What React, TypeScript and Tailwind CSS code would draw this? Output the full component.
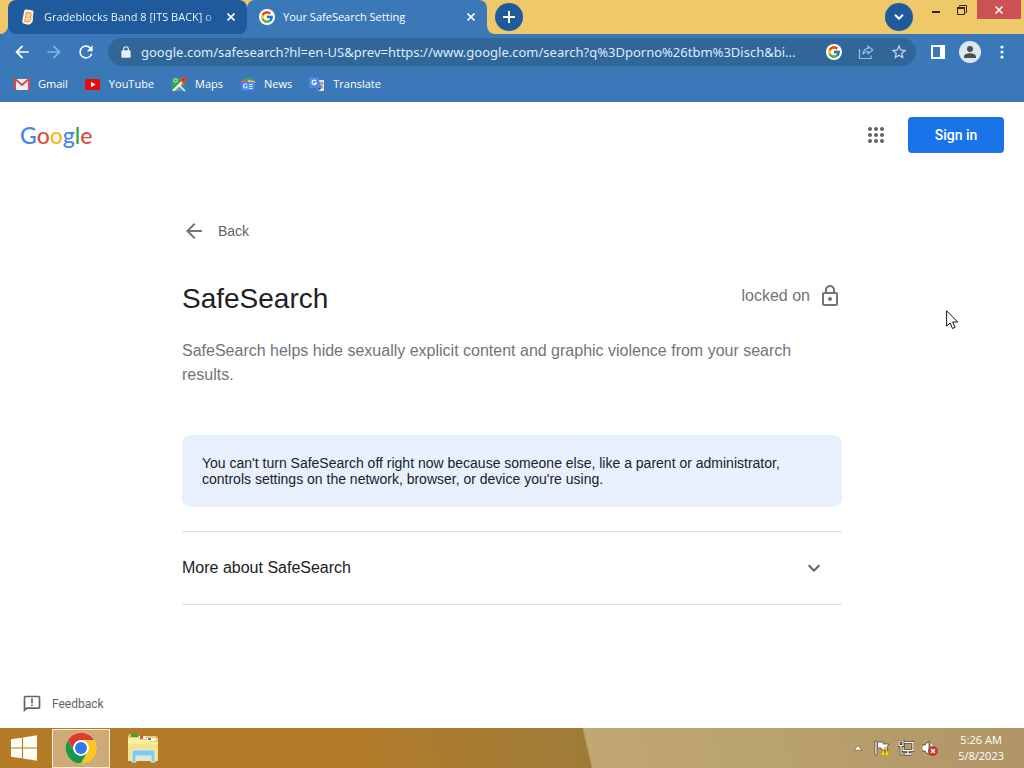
import type { ReactNode } from "react";
import { FcGoogle } from "react-icons/fc";

const segoe = "font-['Open_Sans','Noto_Sans',sans-serif]";

function MaterialIcon({ d, className }: { d: string; className: string }) {
  return (
    <svg viewBox="0 0 24 24" className={className} fill="currentColor" aria-hidden="true">
      <path d={d} />
    </svg>
  );
}

const arrowBack = "M20 11H7.83l5.59-5.59L12 4l-8 8 8 8 1.41-1.41L7.83 13H20v-2z";
const arrowForward = "M12 4l-1.41 1.41L16.17 11H4v2h12.17l-5.58 5.59L12 20l8-8z";
const refresh =
  "M17.65 6.35A7.958 7.958 0 0 0 12 4a8 8 0 1 0 7.73 10h-2.08A6 6 0 1 1 12 6c1.66 0 3.14.69 4.22 1.78L13 11h7V4l-2.35 2.35z";
const lockOutline =
  "M18 8h-1V6c0-2.76-2.24-5-5-5S7 3.24 7 6v2H6c-1.1 0-2 .9-2 2v10c0 1.1.9 2 2 2h12c1.1 0 2-.9 2-2V10c0-1.1-.9-2-2-2zM9 6c0-1.66 1.34-3 3-3s3 1.34 3 3v2H9V6zm9 14H6V10h12v10zm-6-3c1.1 0 2-.9 2-2s-.9-2-2-2-2 .9-2 2 .9 2 2 2z";
const lockSolid =
  "M18 9h-1V7A5 5 0 0 0 7 7v2H6a2 2 0 0 0-2 2v9a2 2 0 0 0 2 2h12a2 2 0 0 0 2-2v-9a2 2 0 0 0-2-2zM9 7a3 3 0 0 1 6 0v2H9z";
const star =
  "M22 9.24l-7.19-.62L12 2 9.19 8.63 2 9.24l5.46 4.73L5.82 21 12 17.27 18.18 21l-1.63-7.03L22 9.24zM12 15.4l-3.76 2.27 1-4.28-3.32-2.88 4.38-.38L12 6.1l1.71 4.04 4.38.38-3.32 2.88 1 4.28L12 15.4z";
const expandMore = "M16.59 8.59L12 13.17 7.41 8.59 6 10l6 6 6-6z";
const feedback =
  "M20 2H4c-1.1 0-1.99.9-1.99 2L2 22l4-4h14c1.1 0 2-.9 2-2V4c0-1.1-.9-2-2-2zm0 14H5.17L4 17.17V4h16v12zM11 5h2v6h-2V5zm0 7.5h2v2h-2z";

function TabClose() {
  return (
    <button aria-label="Close tab" className="flex size-4 shrink-0 items-center justify-center text-white">
      <svg viewBox="0 0 8 8" className="size-2" stroke="currentColor" strokeWidth="1.6">
        <path d="M0.5 0.5l7 7M7.5 0.5l-7 7" />
      </svg>
    </button>
  );
}

function GoogleBadge() {
  return (
    <span className="flex size-4 shrink-0 items-center justify-center rounded-full bg-white">
      <FcGoogle className="size-3.5" />
    </span>
  );
}

function TabStrip() {
  return (
    <div className="flex h-[34px] bg-[linear-gradient(#efc869_50%,#3a78b8_50%)]">
      <div className="w-2 rounded-br-lg bg-[#efc869]" />
      <div className="flex w-[239px] items-center rounded-lg bg-[#1f5b9c] pr-2 pl-3">
        <svg viewBox="0 0 16 16" className="mr-2 size-4 shrink-0">
          <path
            d="M5 .8Q5.300 .2 6.500 .4L12 1.200Q13.800 1.600 13.500 3.500L12.800 8 13 10.500Q12.800 13.500 10.500 15L8 15.800 3.500 14.600Q2 14 2.300 12L3.800 3.500Q4 1.800 5 .8z"
            fill="#fdf3e4"
          />
          <path
            d="M6.500 3.500L10.500 4Q11.600 4.600 11 6.400L10.200 8Q11 9 10.300 11Q9.500 13 7.500 12.800L4.800 12.200z"
            fill="none"
            stroke="#eda04c"
            strokeWidth="1.4"
          />
          <path d="M6 8l4 .5M7.500 5.800l1.500 .2M7 10.500l1.500 .2" stroke="#eda04c" strokeWidth="1.2" />
        </svg>
        <span className="min-w-0 flex-1 bg-[linear-gradient(90deg,#fff_88%,transparent)] bg-clip-text text-[11px] leading-4 whitespace-nowrap text-transparent">
          Gradeblocks Band 8 [ITS BACK] o
        </span>
        <TabClose />
      </div>
      <div className="flex w-60 items-center rounded-t-lg bg-[#3a78b8] pr-2 pl-3 text-white">
        <GoogleBadge />
        <span className="ml-2 flex-1 text-[11px] leading-4">Your SafeSearch Setting</span>
        <TabClose />
      </div>
      <div className="flex flex-1 items-start rounded-bl-lg bg-[#efc869] pl-2">
        <button
          aria-label="New tab"
          className="mt-[3px] flex size-7 items-center justify-center rounded-full bg-[#1f5b9c]"
        >
          <svg viewBox="0 0 12 12" className="size-3" stroke="#fff" strokeWidth="2">
            <path d="M6 0v12M0 6h12" />
          </svg>
        </button>
        <button
          aria-label="Search tabs"
          className="mt-[3px] ml-auto flex size-7 items-center justify-center rounded-full bg-[#1f5b9c]"
        >
          <svg viewBox="0 0 10 6" className="h-1.5 w-2.5" fill="none" stroke="#fff" strokeWidth="2">
            <path d="M1 .8l4 4 4-4" />
          </svg>
        </button>
        <button aria-label="Minimize" className="ml-[10px] flex h-5 w-[26px] items-center justify-center">
          <svg viewBox="0 0 8 10" className="h-2.5 w-2">
            <rect y="6" width="8" height="2" fill="#3a2512" />
          </svg>
        </button>
        <button aria-label="Restore" className="flex h-5 w-[26px] items-center justify-center">
          <svg viewBox="0 0 10 10" className="size-2.5" fill="none" stroke="#3a2512">
            <path d="M2.500 1.500v-1h7v7h-1" />
            <path d="M.5 3.500h7v6h-7z" />
            <path d="M0 3h8" strokeWidth="2" />
          </svg>
        </button>
        <button
          aria-label="Close"
          className="mr-[3px] ml-0.5 flex h-[19px] w-[44px] items-center justify-center bg-[#ca5255]"
        >
          <svg viewBox="0 0 8 8" className="size-2" stroke="#fff" strokeWidth="1.5">
            <path d="M.5.5l7 7M7.500.5l-7 7" />
          </svg>
        </button>
      </div>
    </div>
  );
}

function Toolbar() {
  return (
    <div className="flex h-9 items-center pr-[15px] pl-3 text-white">
      <button aria-label="Back" className="flex w-8">
        <MaterialIcon d={arrowBack} className="size-5" />
      </button>
      <button aria-label="Forward" className="flex w-8 text-[#86b1e0]">
        <MaterialIcon d={arrowForward} className="size-5" />
      </button>
      <button aria-label="Reload" className="flex w-8">
        <MaterialIcon d={refresh} className="size-5" />
      </button>
      <div className="flex h-7 min-w-0 flex-1 items-center rounded-full bg-[#316699] pr-2 pl-2.5">
        <MaterialIcon d={lockSolid} className="ml-px size-3.5 shrink-0 text-[#e4effa]" />
        <input
          aria-label="Address"
          readOnly
          value="google.com/safesearch?hl=en-US&prev=https://www.google.com/search?q%3Dporno%26tbm%3Disch&bi..."
          className="mr-2 ml-2 min-w-0 flex-1 bg-transparent font-['Noto_Sans',sans-serif] text-[13px] leading-5 text-[#dcecfb] outline-none"
        />
        <GoogleBadge />
        <button aria-label="Share" className="ml-4 text-[#9dbfe0]">
          <svg viewBox="0 0 16 16" className="size-4" fill="none" stroke="currentColor" strokeWidth="1.2">
            <path d="M1.500 5v9.500h11.500v-3" />
            <path d="M10 2.200l4.800 3.800-4.800 3.800v-2.300c-2.500 0-4 .8-5 2.700 .2-3.300 1.800-5.400 5-5.900z" />
          </svg>
        </button>
        <button aria-label="Bookmark this page" className="ml-4 text-[#c3daf1]">
          <MaterialIcon d={star} className="size-[18px]" />
        </button>
      </div>
      <button aria-label="Side panel" className="ml-[15px]">
        <svg viewBox="0 0 14 14" className="size-3.5" fill="none">
          <path d="M1 1h12v12H1z" stroke="#fff" strokeWidth="2" />
          <path d="M9 0h5v14H9z" fill="#fff" />
        </svg>
      </button>
      <button aria-label="Profile" className="ml-3.5">
        <svg viewBox="0 0 22 22" className="size-[22px]">
          <circle cx="11" cy="11" r="11" fill="#dce6ee" />
          <circle cx="11" cy="8" r="3" fill="#4d4f57" />
          <path d="M5 17v-1.500c0-2.400 3.500-3.300 6-3.300s6 .9 6 3.300V17z" fill="#4d4f57" />
        </svg>
      </button>
      <button aria-label="Menu" className="ml-3.5 flex w-[14px] justify-center">
        <svg viewBox="0 0 4 14" className="h-3.5 w-1" fill="#fff">
          <circle cx="2" cy="2" r="1.600" />
          <circle cx="2" cy="7" r="1.600" />
          <circle cx="2" cy="12" r="1.600" />
        </svg>
      </button>
    </div>
  );
}

function Bookmark({ label, children }: { label: string; children: ReactNode }) {
  return (
    <a href="#" className="flex items-center gap-2 text-[11px] leading-4 text-white">
      <svg viewBox="0 0 16 16" className="size-4 shrink-0">
        {children}
      </svg>
      {label}
    </a>
  );
}

function Bookmarks() {
  return (
    <nav className="flex h-8 items-start gap-[17px] px-3.5 pt-1.5">
      <Bookmark label="Gmail">
        <path d="M1 3h14v11H1z" fill="#f1f0f2" />
        <path d="M1 14V3l7 6 7-6v11" fill="none" stroke="#d8494c" strokeWidth="2" />
        <path d="M2 14l4.500-5M14 14L9.500 9" stroke="#d5d5d9" />
      </Bookmark>
      <Bookmark label="YouTube">
        <rect y="3" width="15" height="11" rx="1.500" fill="#f20505" />
        <path d="M6 5.800v5.400l4.500-2.700z" fill="#fff" />
      </Bookmark>
      <Bookmark label="Maps">
        <path d="M1 2h9l4 4v5L8 9l-6 6H1z" fill="#37a15b" />
        <path d="M8 9l6 6H2z" fill="#5a90e8" />
        <path d="M1 15L11 5l2 2-9 8z" fill="#f6cf48" />
        <path d="M2 14.500L12 4.500M8 9l6 6" stroke="#fff" strokeWidth="1.300" />
        <circle cx="4.500" cy="4.500" r="1.800" fill="none" stroke="#d8eee0" />
        <path d="M9.500 3.500a3 3 0 0 1 6 0c0 2-1.800 2.800-3 5.500-1.200-2.700-3-3.500-3-5.500z" fill="#e2443a" />
        <circle cx="12.500" cy="3.500" r="1" fill="#8d2923" />
      </Bookmark>
      <Bookmark label="News">
        <path d="M3 3l9-1.500 1 6H3z" fill="#35a567" />
        <path d="M1 5l4-1.500L8 8 3 10z" fill="#e95c4b" />
        <path d="M8 4l7 1-1 5H7z" fill="#f5c54a" />
        <rect x="1.500" y="6" width="12.500" height="8.500" rx="1" fill="#4d86ec" />
        <path d="M7 8.800a2 2 0 1 0 .2 2H5.700M9 8.500h3.500M9 10.500h3.500M9 12.500h3.500" fill="none" stroke="#e2ecfd" strokeWidth="1.100" />
      </Bookmark>
      <Bookmark label="Translate">
        <path d="M6 4h9v11H9z" fill="#e2e4e8" />
        <path d="M0 1h9l3.500 11H0z" fill="#4b86e8" />
        <path d="M8.500 12H12.500L9.500 15z" fill="#2d58ad" />
        <path d="M7 5a2.200 2.200 0 1 0 .4 2H5.200" fill="none" stroke="#fff" strokeWidth="1.200" />
        <path d="M10 7h4.500M12.500 6v1M13.500 7c0 2-1 3.500-2.500 4.500M11 8.500c.5 1.500 1.500 2.500 3 3" fill="none" stroke="#737a87" strokeWidth=".9" />
      </Bookmark>
    </nav>
  );
}

function ChromeLogo() {
  return (
    <svg viewBox="0 0 48 48" className="size-8">
      <circle cx="24" cy="24" r="23" fill="#fff" />
      <path d="M4.080 12.500A23 23 0 0 1 43.920 12.500H24A11.500 11.500 0 0 0 14.040 29.750z" fill="#dd3b2e" />
      <path d="M43.920 12.500A23 23 0 0 1 24 47L33.960 29.750A11.500 11.500 0 0 0 24 12.500z" fill="#fbc91d" />
      <path d="M24 47A23 23 0 0 1 4.080 12.500L14.040 29.750A11.500 11.500 0 0 0 33.960 29.750z" fill="#179a45" />
      <circle cx="24" cy="24" r="11.500" fill="#fff" />
      <circle cx="24" cy="24" r="9" fill="#2f78ec" />
    </svg>
  );
}

function Taskbar() {
  return (
    <footer className="flex h-10 items-center bg-[linear-gradient(77deg,#b57c27_0%,#b27b2a_35%,#9e7c38_57.200%,#c1a873_57.400%,#baa26d_75%,#b09467_100%)]">
      <button aria-label="Start" className="flex w-[52px] justify-center pr-1">
        <svg viewBox="0 0 26 26" className="size-[26px]" fill="#fffdf3">
          <path d="M0 4.200L11 2.700v9.800H0zM12 2.500L26 .3v12.200H12zM0 13.500h11v9.800L0 21.800zM12 13.500h14v12.200L12 23.500z" />
        </svg>
      </button>
      <button
        aria-label="Google Chrome"
        className="flex h-[39px] w-[58px] items-center justify-center border border-[#f8ecd0] bg-[#ceab76]"
      >
        <ChromeLogo />
      </button>
      <button aria-label="File Explorer" className="ml-4">
        <svg viewBox="0 0 34 32" className="h-8 w-[34px]">
          <path d="M2 4l2-2h7l2 2h17l2 2v22H2z" fill="#e9cf72" />
          <path d="M5 2h7v3H5z" fill="#34a63c" />
          <path d="M13 4h7v3h-7z" fill="#fff6e2" />
          <path d="M14 4h3v3h-3z" fill="#df5545" />
          <path d="M21 6h9v3h-9z" fill="#fff6e2" />
          <path d="M22 6h3v2h-3z" fill="#4385bd" />
          <path d="M2 6h10l2 2h8l2 2h8v19H2z" fill="#faeea1" />
          <path d="M2 12h30v17H2z" fill="#f5e48b" />
          <path d="M6 20q0-2 2-2h19q2 0 2 2v10h-4v-6H10v6H6z" fill="#84c7e9" stroke="#d7effa" />
          <path d="M11 25h13v3H11z" fill="#c9e9f5" />
        </svg>
      </button>
      <div className="mr-5 ml-auto flex items-center">
        <button aria-label="Show hidden icons" className="mr-[11px]">
          <svg viewBox="0 0 10 6" className="h-1.5 w-2.5">
            <path d="M5 .5L9 5.300H1z" fill="#fff" stroke="#6d5430" strokeWidth=".7" />
          </svg>
        </button>
        <svg viewBox="0 0 16 16" className="mr-2 size-4" aria-label="Action center">
          <path d="M1 1h2v14H1z" fill="#fff" stroke="#4c3a22" strokeWidth=".7" />
          <path d="M3.500 2h5l1 2H15l-2 3 1 3H8L7 8H3.500z" fill="#fff" stroke="#4c3a22" strokeWidth=".7" />
          <path d="M11 7l4.500 8.500h-9z" fill="#f3d926" stroke="#b5940d" strokeWidth=".6" />
          <path d="M11 9.800v3M11 13.600v1" stroke="#3b3010" strokeWidth="1.100" />
        </svg>
        <svg viewBox="0 0 16 16" className="mr-2 size-4" fill="none" aria-label="Network">
          <path d="M5 2.500h10v8H5zM10 10.500v3M6 14h7.500" stroke="#433620" strokeWidth="3" />
          <path d="M5 2.500h10v8H5zM10 10.500v3M6 14h7.500" stroke="#fff" strokeWidth="1.300" />
          <path d="M1 1h4v4.500H1zM3 5.500V14h4" stroke="#433620" strokeWidth="2.600" />
          <path d="M1 1h4v4.500H1zM3 5.500V14h4" stroke="#fff" strokeWidth="1.200" />
        </svg>
        <svg viewBox="0 0 16 16" className="mr-5 size-4" aria-label="Muted">
          <path d="M0 5h3l4-4v14l-4-4H0z" fill="#fff" stroke="#4c3a22" strokeWidth=".8" />
          <path d="M9 4q1.500 2 1 4" stroke="#fff" fill="none" strokeWidth="1.300" />
          <circle cx="11" cy="11" r="4.500" fill="#d63b39" stroke="#8f1e1d" strokeWidth=".6" />
          <path d="M9.200 9.200l3.600 3.600M12.800 9.200l-3.600 3.600" stroke="#fff" strokeWidth="1.400" />
        </svg>
        <div className="text-center text-[11px] leading-4 text-white">
          <p>5:26 AM</p>
          <p>5/8/2023</p>
        </div>
      </div>
    </footer>
  );
}

function SafeSearchPage() {
  return (
    <div className="flex flex-1 flex-col bg-white font-['Liberation_Sans',Arial,sans-serif]">
      <header className="flex items-center justify-between px-5 pt-[15px]">
        <a
          href="#"
          aria-label="Google"
          className="font-['Lato',sans-serif] text-[23px] leading-9 font-medium text-[#4484ee]"
        >
          <span>G</span>
          <span className="text-[#e1483c]">o</span>
          <span className="text-[#f5b916]">o</span>
          <span>g</span>
          <span className="text-[#37a355]">l</span>
          <span className="text-[#e1483c]">e</span>
        </a>
        <div className="flex items-center gap-5">
          <button aria-label="Google apps">
            <svg viewBox="0 0 24 24" className="size-6" fill="#5f6368">
              {[6, 12, 18].map((cy) =>
                [6, 12, 18].map((cx) => <circle key={`${cx}-${cy}`} cx={cx} cy={cy} r="2" />),
              )}
            </svg>
          </button>
          <a
            href="#"
            className="flex h-9 w-24 items-center justify-center rounded bg-[#1a73e8] font-['Roboto',sans-serif] text-sm font-medium text-white"
          >
            Sign in
          </a>
        </div>
      </header>

      <main className="mx-auto w-full max-w-[660px] flex-1 pt-[66px]">
        <a href="#" className="flex w-fit items-center gap-3 text-sm leading-6 text-[#5f6368]">
          <MaterialIcon d={arrowBack} className="size-6 text-[#757575]" />
          Back
        </a>

        <div className="mt-9 flex items-center justify-between">
          <h1 className="text-[28px] leading-10 text-[#202124]">SafeSearch</h1>
          <p className="flex items-center gap-2 pb-1.5 text-base text-[#70757a]">
            locked on
            <MaterialIcon d={lockOutline} className="size-6 text-[#70757a]" />
          </p>
        </div>

        <p className="mt-5 text-base leading-6 text-[#70757a]">
          SafeSearch helps hide sexually explicit content and graphic violence from your search results.
        </p>

        <p className="mt-12 rounded-lg bg-[#e8f0fe] p-5 text-sm leading-4 text-[#202124]">
          You can't turn SafeSearch off right now because someone else, like a parent or administrator, controls
          settings on the network, browser, or device you're using.
        </p>

        <button className="mt-6 flex h-[74px] w-full items-center justify-between border-y border-[#dadce0] pr-4 text-base text-[#202124]">
          More about SafeSearch
          <MaterialIcon d={expandMore} className="size-6 text-[#5f6368]" />
        </button>
      </main>

      <div className="flex h-12 items-center px-[22px]">
        <a
          href="#"
          className="flex items-center gap-2.5 font-['Roboto',sans-serif] text-xs text-[#5f6368]"
        >
          <MaterialIcon d={feedback} className="size-5" />
          Feedback
        </a>
      </div>
    </div>
  );
}

export default function App() {
  return (
    <div className={`relative flex min-h-screen flex-col ${segoe}`}>
      <TabStrip />
      <div className="bg-[#3a78b8]">
        <Toolbar />
        <Bookmarks />
      </div>
      <SafeSearchPage />
      <Taskbar />
      <svg viewBox="0 0 13 20" className="pointer-events-none absolute top-[310px] left-[946px] h-5 w-[13px]">
        <path
          d="M.6 .8v15.400l3.500-3.300 2.400 5.600 2.600-1.100-2.400-5.400h5z"
          fill="#fff"
          stroke="#111"
          strokeWidth="1"
        />
      </svg>
    </div>
  );
}
